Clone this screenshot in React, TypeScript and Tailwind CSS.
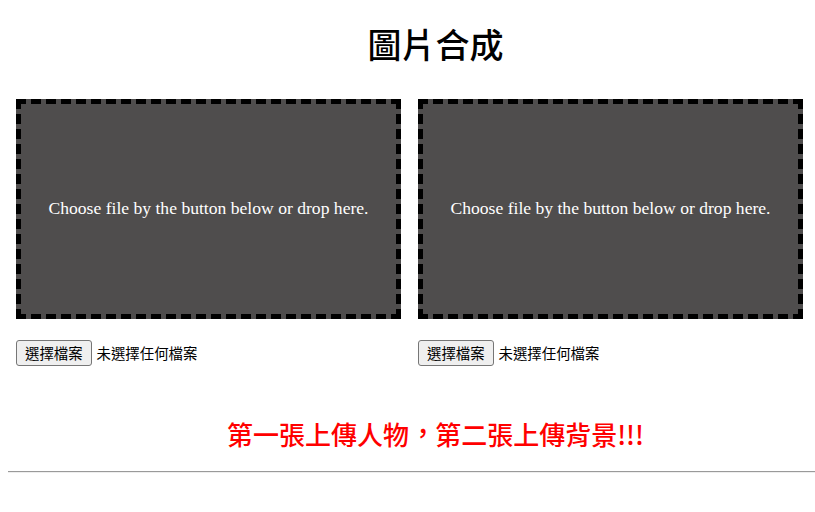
const cjk = { fontFamily: '"Noto Sans CJK TC", "Noto Sans", sans-serif' };

function DropZone() {
  return (
    <div className="flex flex-col">
      <div className="w-[385px] h-[220px] border-[5px] border-dashed border-black bg-[#4f4d4d] flex items-center justify-center">
        <p
          className="text-white text-[17.6px] pb-[2px]"
          style={{ fontFamily: '"Liberation Serif", serif' }}
        >
          Choose file by the button below or drop here.
        </p>
      </div>
      <div className="mt-[21px] flex items-center gap-[5px] text-[14.4px] text-black" style={cjk}>
        <button className="h-[26px] px-[8px] border border-[#767676] rounded-[3px] bg-[#efefef] leading-none">
          選擇檔案
        </button>
        <span>未選擇任何檔案</span>
      </div>
    </div>
  );
}

export default function App() {
  return (
    <div lang="zh-Hant-TW" className="w-[815px] h-[512px] bg-white overflow-hidden pl-2" style={cjk}>
      <h1 className="pt-[22px] pl-[48px] text-center text-[34px] font-medium leading-[44px] text-black">
        圖片合成
      </h1>
      <div className="mt-[33px] ml-2 flex gap-[17px]">
        <DropZone />
        <DropZone />
      </div>
      <p className="mt-[50px] pl-[48px] text-center text-[26px] font-medium leading-[36px] text-[#ff0000]">
        第一張上傳人物<span className="inline-block translate-x-[1px] -translate-y-[2px]">，</span>第二張上傳背景!!!
      </p>
      <div className="mt-[19px] border-t border-t-[#9a9a9a] border-b border-b-[#eeeeee]" />
    </div>
  );
}
